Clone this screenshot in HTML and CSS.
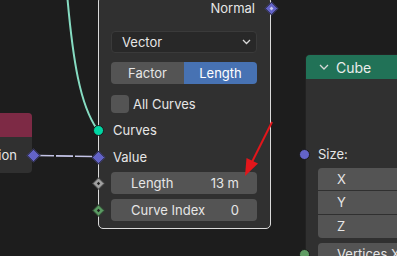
FILE: index.html
```html
<!DOCTYPE html>
<html>

<head>
  <title>Curve Length Node</title>
  <link rel="stylesheet" href="styles.css">
</head>

<body>
  <div class="editor">
    <svg class="links" width="397" height="256">
      <path d="M67.5 -1 C73 60, 80 105, 97 129" class="link-green" />
      <path d="M37 155.5 L93 156.5" class="link-field" />
    </svg>

    <div class="node node-left">
      <div class="header header-red"></div>
      <div class="left-body">
        <div class="out-row">Position<span class="socket diamond purple out"></span></div>
      </div>
    </div>

    <div class="node node-main">
      <div class="row row-right">Normal<span class="socket diamond purple dotted out"></span></div>
      <div class="dropdown">
        <span>Vector</span>
        <svg width="9" height="6" viewBox="0 0 9 6"><polyline points="1,1 4.5,4.5 8,1" /></svg>
      </div>
      <div class="segmented">
        <div class="seg">Factor</div>
        <div class="seg active">Length</div>
      </div>
      <div class="check-row">
        <span class="checkbox"></span>All Curves
      </div>
      <div class="row socket-row">
        <span class="socket circle mint"></span>Curves
      </div>
      <div class="row socket-row row-value">
        <span class="socket diamond purple"></span>Value
      </div>
      <div class="field first">
        <span class="socket diamond grey dotted small"></span>
        <span>Length</span><span>13 m</span>
      </div>
      <div class="field">
        <span class="socket diamond green dotted small"></span>
        <span>Curve Index</span><span>0</span>
      </div>
    </div>

    <div class="node node-cube">
      <div class="header header-green">
        <svg width="10" height="6" viewBox="0 0 10 6"><polyline points="1,1 5,5 9,1" /></svg>
        Cube
      </div>
      <div class="cube-body">
        <div class="size-row"><span class="socket circle purple"></span>Size:</div>
        <div class="vector">
          <div class="vfield">X</div>
          <div class="vfield">Y</div>
          <div class="vfield">Z</div>
        </div>
        <div class="vfield single"><span class="socket circle green-int"></span>Vertices X</div>
      </div>
    </div>

    <svg class="arrow" width="397" height="256">
      <line x1="272" y1="122" x2="252" y2="162" />
      <polygon points="245,176 246.5,158 258,163.5" />
    </svg>
  </div>
</body>

</html>
```

FILE: styles.css
```css
body {
  margin: 0;
  background-color: #1d1d1d;
  font-family: Inter, "Noto Sans", sans-serif;
  font-size: 13px;
  color: #e6e6e6;
}
.editor {
  position: relative;
  width: 397px;
  height: 256px;
  overflow: hidden;
}
.links,
.arrow {
  position: absolute;
  left: 0;
  top: 0;
}
.arrow {
  z-index: 5;
}
.link-green {
  fill: none;
  stroke: #86dcc2;
  stroke-width: 2;
}
.link-field {
  fill: none;
  stroke: #c4c4e6;
  stroke-width: 1.6;
  stroke-dasharray: 17 2;
}
.arrow line {
  stroke: #e3161b;
  stroke-width: 2;
}
.arrow polygon {
  fill: #e3161b;
}

/* nodes */
.node {
  position: absolute;
  box-sizing: border-box;
  background-color: #303030;
  border-radius: 5px;
}
.node-left {
  left: -100px;
  top: 113px;
  width: 132px;
  height: 60px;
  border-radius: 4px;
}
.header-red {
  height: 24px;
  background-color: #7d2a45;
  border-radius: 4px 4px 0 0;
}
.left-body {
  padding-top: 7px;
}
.out-row {
  position: relative;
  height: 22px;
  line-height: 22px;
  text-align: right;
  padding-right: 15px;
}
.node-main {
  left: 98px;
  top: -4px;
  width: 173px;
  height: 233px;
  border: 1px solid #dadada;
  display: flex;
  flex-direction: column;
  z-index: 2;
}
.row {
  position: relative;
  height: 22px;
  line-height: 22px;
  padding: 0 13px 0 14px;
}
.row-right {
  text-align: right;
  padding-right: 15px;
}
.dropdown {
  margin: 12px 13px 0 12px;
  height: 22px;
  box-sizing: border-box;
  background-color: #282828;
  border: 1px solid #3a3a3a;
  border-radius: 4px;
  display: flex;
  align-items: center;
  justify-content: space-between;
  padding: 0 5px 0 10px;
}
.dropdown polyline,
.header polyline {
  fill: none;
  stroke: #d8d8d8;
  stroke-width: 1.3;
}
.segmented {
  margin: 9px 13px 0 12px;
  height: 22px;
  display: flex;
  border-radius: 4px;
  overflow: hidden;
}
.seg {
  flex: 1;
  text-align: center;
  line-height: 22px;
  background-color: #545454;
}
.seg.active {
  background-color: #4772b3;
  color: #ffffff;
}
.check-row {
  margin: 10px 13px 0 12px;
  height: 20px;
  display: flex;
  align-items: center;
  gap: 4px;
}
.checkbox {
  width: 18px;
  height: 18px;
  background-color: #545454;
  border-radius: 4px;
}
.socket-row {
  margin-top: 5px;
}
.field {
  position: relative;
  margin: 5px 13px 0 12px;
  height: 22px;
  background-color: #545454;
  border-radius: 4px;
  display: flex;
  align-items: center;
  justify-content: space-between;
  padding: 0 18px 0 20px;
}
.field.first {
  margin-top: 4px;
}
.field .socket {
  left: -18px;
}

/* sockets */
.socket {
  position: absolute;
  top: 5.5px;
  left: -6.5px;
  width: 11px;
  height: 11px;
  box-sizing: border-box;
}
.socket.out {
  left: auto;
  right: -6.5px;
}
.circle {
  border-radius: 50%;
  border: 1px solid #1a1a1a;
}
.diamond {
  transform: rotate(45deg) scale(0.9);
  border: 1px solid #1a1a1a;
}
.diamond.small {
  transform: rotate(45deg) scale(0.8);
}
.dotted::after {
  content: "";
  position: absolute;
  left: 3px;
  top: 3px;
  width: 3px;
  height: 3px;
  background-color: #202020;
}
.purple.dotted::after {
  background-color: #c8c8f0;
}
.purple {
  background-color: #6363c7;
}
.mint {
  background-color: #00d6a3;
}
.grey {
  background-color: #a1a1a1;
}
.green {
  background-color: #5a9a62;
}
.green-int {
  background-color: #5f9c63;
}

/* cube node */
.node-cube {
  left: 305px;
  top: 54px;
  width: 130px;
  height: 240px;
  border: 1px solid #222222;
}
.header-green {
  height: 24px;
  background-color: #217257;
  border-radius: 4px 4px 0 0;
  display: flex;
  align-items: center;
  gap: 7px;
  padding-left: 13px;
  font-size: 14px;
  color: #ececec;
}
.cube-body {
  padding: 64px 0 0 12px;
}
.size-row {
  position: relative;
  height: 22px;
  line-height: 22px;
}
.size-row .socket {
  left: -19.5px;
}
.vector {
  margin-top: 3px;
  display: flex;
  flex-direction: column;
  gap: 1px;
}
.vfield {
  position: relative;
  height: 23px;
  line-height: 23px;
  background-color: #545454;
  padding-left: 19px;
}
.vector .vfield:first-child {
  height: 22px;
  line-height: 22px;
  border-radius: 4px 0 0 0;
}
.vector .vfield:last-child {
  border-radius: 0 0 0 4px;
}
.vfield.single {
  margin-top: 5px;
  border-radius: 4px 0 0 4px;
  height: 22px;
  line-height: 22px;
}
.vfield.single .socket {
  left: -19.5px;
}
```
